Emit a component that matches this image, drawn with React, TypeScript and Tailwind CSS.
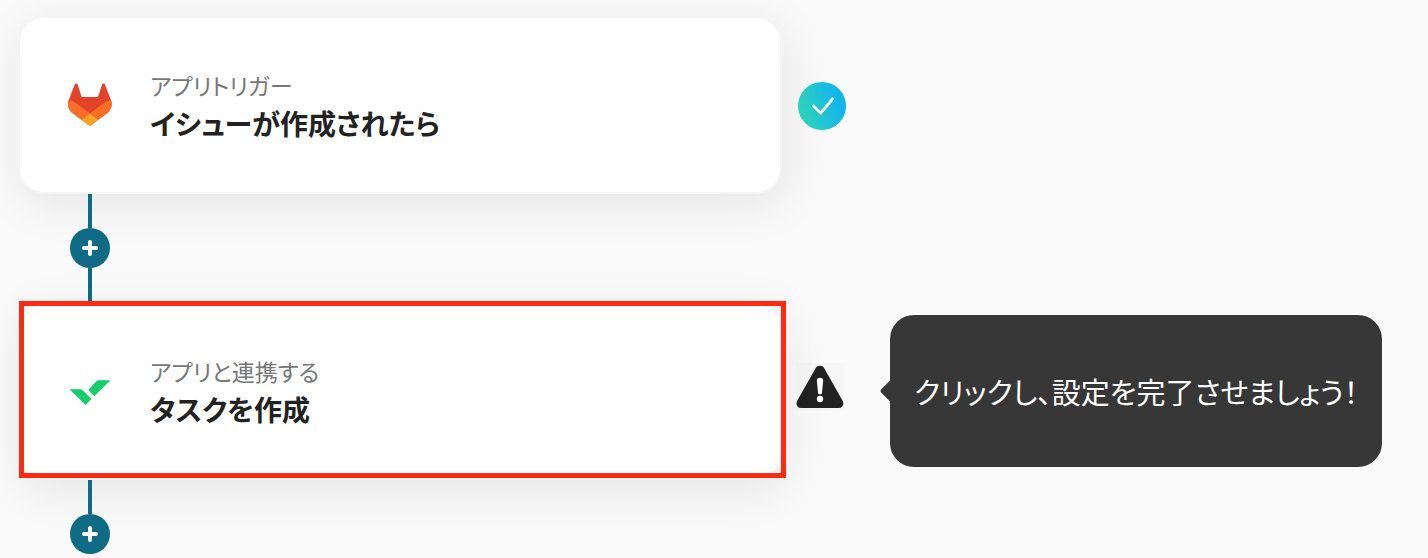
import React from "react";

function GitlabLogo() {
  return (
    <svg viewBox="0 -0.9 25.1 25.1" className="h-11 w-11 shrink-0" aria-hidden="true">
      <path fill="#E24329" d="m24.507 9.5-.034-.09L21.082.562a.896.896 0 0 0-1.694.091l-2.29 7.01H7.825L5.535.653a.898.898 0 0 0-1.694-.09L.451 9.411.416 9.5a6.297 6.297 0 0 0 2.09 7.278l.012.01.03.022 5.16 3.867 2.56 1.935 1.554 1.176a1.051 1.051 0 0 0 1.268 0l1.555-1.176 2.56-1.935 5.197-3.89.014-.01A6.297 6.297 0 0 0 24.507 9.5Z" />
      <path fill="#FC6D26" d="m24.507 9.5-.034-.09a11.44 11.44 0 0 0-4.56 2.051l-7.447 5.632 4.742 3.584 5.197-3.89.014-.01A6.297 6.297 0 0 0 24.507 9.5Z" />
      <path fill="#FCA326" d="m7.707 20.677 2.56 1.935 1.555 1.176a1.051 1.051 0 0 0 1.268 0l1.555-1.176 2.56-1.935-4.743-3.584-4.755 3.584Z" />
      <path fill="#FC6D26" d="M5.01 11.461a11.43 11.43 0 0 0-4.56-2.05L.416 9.5a6.297 6.297 0 0 0 2.09 7.278l.012.01.03.022 5.16 3.867 4.745-3.584-7.444-5.632Z" />
    </svg>
  );
}

function WrikeLogo() {
  return (
    <svg viewBox="0 -1 44 44" className="h-11 w-11 shrink-0" fill="#16CF6B" aria-hidden="true">
      <path d="M1.6 20.3H11c2.4 0 3.2.4 4.6 1.7l7.8 8-5.9 6L1.6 20.3Z" />
      <path d="M42.5 11.2H32.4c-2.4 0-3.6.6-4.9 1.9L20.3 21l6 6.3L42.5 11.2Z" />
    </svg>
  );
}

function CheckBadge() {
  return (
    <svg viewBox="0 0 48 48" className="mt-0.5 h-12 w-12 shrink-0" role="img" aria-label="設定済み">
      <defs>
        <linearGradient id="done" x1="0" y1="0.65" x2="1" y2="0.35">
          <stop offset="0.05" stopColor="#2FD8BE" />
          <stop offset="0.85" stopColor="#12B5EA" />
        </linearGradient>
      </defs>
      <circle cx="24" cy="24" r="24" fill="url(#done)" />
      <path d="m15.5 24 7.2 7.2L34.5 17" fill="none" stroke="#fff" strokeWidth="2.8" strokeLinecap="round" strokeLinejoin="round" />
    </svg>
  );
}

function WarningIcon() {
  return (
    <svg viewBox="0 0 48 48" className="mb-2 h-12 w-12 shrink-0 bg-[#f7f7f7]" role="img" aria-label="未設定">
      <path fill="#222" d="M19.6 5.2c1.9-3.2 6.7-3.2 8.6 0l18.4 32.6c1.8 3.2.1 7.2-3.8 7.2H5c-3.9 0-5.6-4-3.8-7.2L19.6 5.2Z" />
      <path fill="#fff" d="M20.8 17.2c0-3.2 6.4-3.2 6.4 0L26 29.7c-.2 2.2-3.8 2.2-4 0l-1.2-12.5Z" />
      <circle cx="24" cy="36" r="3.2" fill="#fff" />
    </svg>
  );
}

function Connector({ last = false }: { last?: boolean }) {
  return (
    <div className="relative ml-[52px] flex w-10 flex-col items-center">
      <span className="h-[34px] w-1 bg-[#0e6b83]" />
      <button type="button" aria-label="ステップを追加" className="flex h-10 w-10 items-center justify-center rounded-full bg-[#0e6b83]">
        <svg viewBox="0 0 16 16" className="h-4 w-4" stroke="#fff" strokeWidth="4" strokeLinecap="round">
          <path d="M8 2v12M2 8h12" />
        </svg>
      </button>
      {!last && <span className="h-[34px] w-1 bg-[#0e6b83]" />}
    </div>
  );
}

type StepCardProps = {
  logo: React.ReactNode;
  label: string;
  title: string;
  highlighted?: boolean;
};

function StepCard({ logo, label, title, highlighted }: StepCardProps) {
  return (
    <div className="relative max-w-[764px] flex-1">
      <button
        type="button"
        className="flex w-full items-center gap-[38px] rounded-[26px] border-2 border-[#f4f4f4] bg-white pt-12 pb-[50px] pl-12 text-left shadow-[4px_10px_48px_rgba(0,0,0,0.09)]"
      >
        {logo}
        <span className="flex flex-col leading-[38px]">
          <span className="text-[23px] text-[#777]">{label}</span>
          <span className="text-[28px] font-bold text-[#222]">{title}</span>
        </span>
      </button>
      {highlighted && <div className="pointer-events-none absolute -top-px -right-1 bottom-0.5 left-px border-[5px] border-[#ff2a12]" />}
    </div>
  );
}

export default function App() {
  return (
    <main className="min-h-screen bg-[#fafafa] pt-4 pl-[18px] font-['Noto_Sans_CJK_JP',sans-serif] [font-feature-settings:'palt']">
      <div className="flex items-center gap-4">
        <StepCard logo={<GitlabLogo />} label="アプリトリガー" title="イシューが作成されたら" />
        <CheckBadge />
      </div>
      <Connector />

      <div className="flex items-center">
        <StepCard logo={<WrikeLogo />} label="アプリと連携する" title="タスクを作成" highlighted />
        <div className="ml-3.5 flex items-center gap-[46px]">
          <WarningIcon />
          <div className="relative rounded-3xl bg-[#373737] px-6 py-14 text-[29px] leading-10 whitespace-nowrap text-white">
            {/* bubble arrow */}
            <span className="absolute top-1/2 -left-[7px] h-4 w-4 -translate-y-1/2 rotate-45 rounded-xs bg-[#373737]" />
            クリックし、設定を完了させましょう！
          </div>
        </div>
      </div>
      <Connector last />
    </main>
  );
}
